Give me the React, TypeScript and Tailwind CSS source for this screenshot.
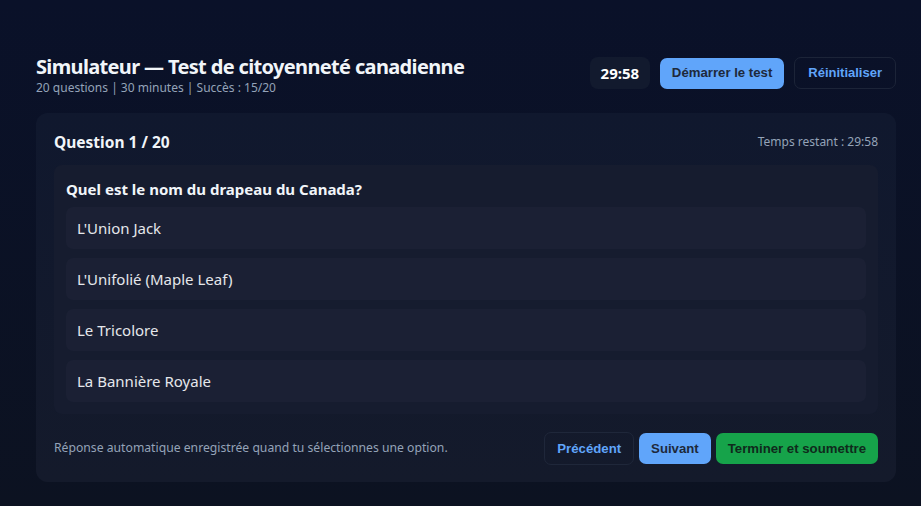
const options = ["L'Union Jack", "L'Unifolié (Maple Leaf)", "Le Tricolore", "La Bannière Royale"];

const App = () => {
    return (
        <div className="min-h-[506px] w-full bg-gradient-to-b from-[#0a1129] to-[#0c1221] pl-9 pr-[25px] pt-[54px] pb-6 text-white [font-family:'Noto_Sans',sans-serif]">
            <div className="flex items-start justify-between">
                <div className="flex flex-col">
                    <h1 className="text-[20px] font-bold leading-[26px] tracking-[-0.65px] text-[#f1f5f9]">
                        Simulateur — Test de citoyenneté canadienne
                    </h1>
                    <p className="text-[12px] leading-[16px] text-[#94a3b8]">
                        20 questions | 30 minutes | Succès : 15/20
                    </p>
                </div>
                <div className="mt-[3px] flex items-center gap-[10px]">
                    <div className="flex h-[32px] w-[60px] items-center justify-center rounded-[8px] bg-[#121a2e] text-[15px] font-bold">
                        29:58
                    </div>
                    <button className="h-[31px] rounded-[7px] bg-[#60a5fa] px-3 text-[13.2px] font-bold text-[#1e293b] [font-family:'Liberation_Sans',sans-serif]">
                        Démarrer le test
                    </button>
                    <button className="h-[32px] rounded-[7px] border border-[#1c2438] px-[13px] text-[13px] font-bold text-[#60a5fa] [font-family:'Liberation_Sans',sans-serif]">
                        Réinitialiser
                    </button>
                </div>
            </div>

            <div className="mt-[17px] rounded-[12px] bg-gradient-to-b from-[#10182e] to-[#141a2b] px-[18px] pt-[18px] pb-[17px]">
                <div className="flex items-center justify-between">
                    <h2 className="text-[15.5px] font-bold leading-[22px] text-[#f1f5f9]">Question 1 / 20</h2>
                    <span className="text-[12px] text-[#94a3b8]">Temps restant : 29:58</span>
                </div>
                <div className="mt-[12px] rounded-[8px] bg-[#161c2f] px-3 pt-[14px] pb-[12px]">
                    <p className="text-[15px] font-bold leading-[20px] text-[#f1f5f9]">
                        Quel est le nom du drapeau du Canada?
                    </p>
                    <div className="mt-[8px] flex flex-col gap-[9px]">
                        {options.map((o) => (
                            <div key={o} className="flex h-[42px] items-center rounded-[7px] bg-[#1b2034] px-[11px] text-[15px] text-[#e5e7eb]">
                                {o}
                            </div>
                        ))}
                    </div>
                </div>
                <div className="mt-[18px] flex items-center justify-between">
                    <p className="text-[12.2px] text-[#94a3b8]">
                        Réponse automatique enregistrée quand tu sélectionnes une option.
                    </p>
                    <div className="flex items-center gap-[5px] [font-family:'Liberation_Sans',sans-serif]">
                        <button className="h-[33px] rounded-[7px] border border-[#1f273a] px-3 text-[13.2px] font-bold text-[#60a5fa]">
                            Précédent
                        </button>
                        <button className="h-[31px] rounded-[7px] bg-[#60a5fa] px-3 text-[13.2px] font-bold text-[#1e293b]">
                            Suivant
                        </button>
                        <button className="h-[31px] rounded-[7px] bg-[#16a34a] px-3 text-[13.2px] font-bold text-[#0f2a1c]">
                            Terminer et soumettre
                        </button>
                    </div>
                </div>
            </div>
        </div>
    );
};

export default App;
